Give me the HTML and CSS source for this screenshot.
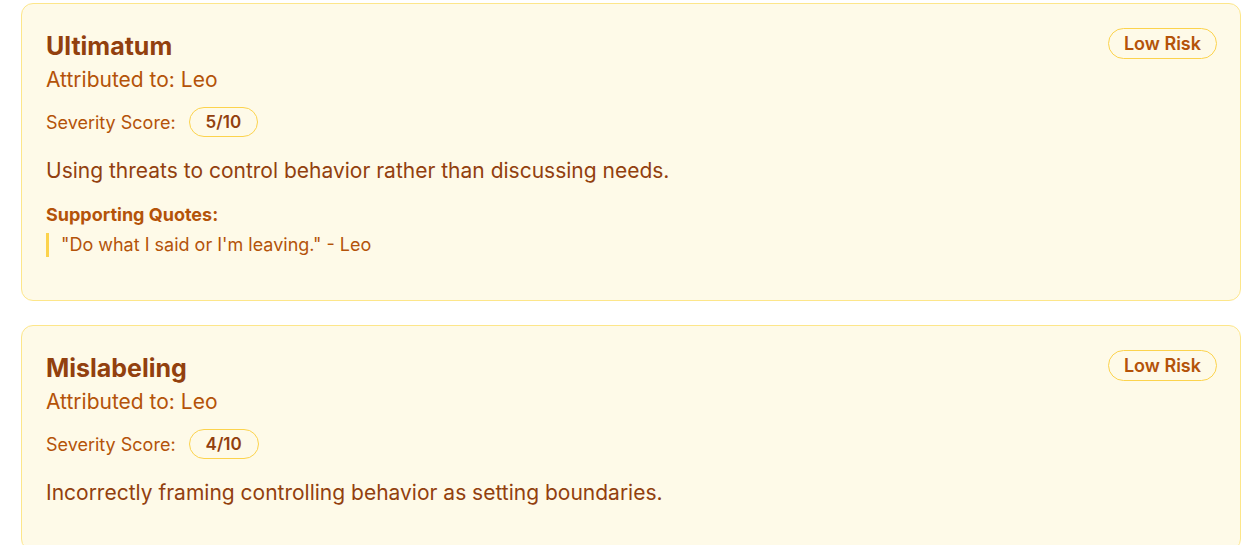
FILE: index.html
```html
<!DOCTYPE html>
<html>
<head>
<meta charset="utf-8">
<link rel="stylesheet" href="styles.css">
</head>
<body>
<div class="list">
  <div class="card">
    <div class="content">
      <h3 class="title">Ultimatum</h3>
      <p class="attr">Attributed to: Leo</p>
      <div class="severity">
        <span class="sev-label">Severity Score:</span>
        <span class="score">5/10</span>
      </div>
      <p class="desc">Using threats to control behavior rather than discussing needs.</p>
      <h4 class="quotes-title">Supporting Quotes:</h4>
      <blockquote class="quote">"Do what I said or I'm leaving." - Leo</blockquote>
    </div>
    <span class="risk">Low Risk</span>
  </div>
  <div class="card">
    <div class="content">
      <h3 class="title">Mislabeling</h3>
      <p class="attr">Attributed to: Leo</p>
      <div class="severity">
        <span class="sev-label">Severity Score:</span>
        <span class="score">4/10</span>
      </div>
      <p class="desc">Incorrectly framing controlling behavior as setting boundaries.</p>
    </div>
    <span class="risk">Low Risk</span>
  </div>
</div>
</body>
</html>
```
FILE: styles.css
```css
html, body {
  margin: 0;
  padding: 0;
  background: #ffffff;
}
body {
  font-family: Inter, "Liberation Sans", sans-serif;
  overflow: hidden;
  height: 545px;
}
.list {
  display: flex;
  flex-direction: column;
  gap: 24px;
  padding: 3px 0 0 21px;
}
.card {
  box-sizing: border-box;
  width: 1220px;
  background: #fefae8;
  border: 1px solid #fde68a;
  border-radius: 12px;
  padding: 24px 23px 24px 24px;
  display: flex;
  justify-content: space-between;
  align-items: flex-start;
}
.content {
  display: flex;
  flex-direction: column;
}
.content > :last-child {
  margin-bottom: 19px;
}
.title {
  margin: 0;
  font-size: 25px;
  line-height: 36px;
  font-weight: 700;
  color: #92400e;
}
.attr {
  margin: 2px 0 0;
  font-size: 21px;
  line-height: 28px;
  color: #b45309;
}
.severity {
  display: flex;
  align-items: center;
  gap: 13px;
  margin-top: 13px;
}
.sev-label {
  font-size: 18px;
  color: #b45309;
}
.score {
  box-sizing: border-box;
  height: 30px;
  padding: 0 16px;
  border: 1px solid #fcd34d;
  border-radius: 15px;
  font-size: 17px;
  font-weight: 600;
  color: #92400e;
  display: flex;
  align-items: center;
}
.desc {
  margin: 20px 0 0;
  font-size: 21px;
  line-height: 28px;
  color: #92400e;
}
.quotes-title {
  margin: 18px 0 0;
  font-size: 18px;
  line-height: 24px;
  font-weight: 700;
  color: #b45309;
}
.quote {
  margin: 6px 0 0;
  border-left: 3px solid #fcd34d;
  padding-left: 12px;
  font-size: 18px;
  line-height: 24px;
  color: #b45309;
}
.risk {
  box-sizing: border-box;
  height: 31px;
  padding: 0 15px;
  border: 1px solid #fcd34d;
  border-radius: 16px;
  font-size: 18px;
  font-weight: 600;
  color: #b45309;
  display: flex;
  align-items: center;
}
```
